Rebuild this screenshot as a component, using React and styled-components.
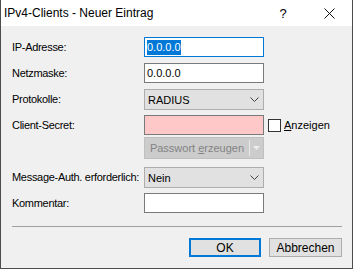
import React from 'react';
import styled, { createGlobalStyle } from 'styled-components';

const GlobalStyle = createGlobalStyle`
  html, body {
    margin: 0;
    padding: 0;
    background: #f0f0f0;
  }
  * {
    box-sizing: border-box;
  }
`

const Window = styled.div`
  width: 353px;
  height: 269px;
  background: #f0f0f0;
  border: 1px solid #4d4d4d;
  border-top: none;
  display: flex;
  flex-direction: column;
  font-family: "Liberation Sans", Arial, sans-serif;
  font-size: 11px;
  color: #000;
`

const TitleBar = styled.div`
  height: 26px;
  background: #fff;
  display: flex;
  align-items: center;
  justify-content: space-between;
  padding-left: 3px;
`

const Title = styled.span`
  font-size: 12px;
  margin-top: -1px;
`

const TitleButtons = styled.div`
  display: flex;
  height: 100%;
`

const TitleButton = styled.div`
  width: 46px;
  height: 100%;
  display: flex;
  align-items: center;
  justify-content: center;
  font-size: 13px;
`

const Form = styled.div`
  display: grid;
  grid-template-columns: 132px 120px auto;
  grid-auto-rows: 26px;
  padding: 11px 0 0 11px;
`

const Label = styled.div`
  height: 20px;
  display: flex;
  align-items: center;
  white-space: nowrap;
  letter-spacing: -0.3px;
`

const TextBox = styled.div`
  height: 20px;
  border: 1px solid ${p => (p.$focused ? '#0078d7' : '#7a7a7a')};
  background: ${p => p.$bg || '#fff'};
  padding: 0 2px;
  display: flex;
  align-items: center;
`

const Selected = styled.span`
  background: #0078d7;
  color: #fff;
  line-height: 15px;
`

const Combo = styled.div`
  height: 21px;
  border: 1px solid #adadad;
  background: #e1e1e1;
  padding: 0 4px 0 3px;
  display: flex;
  align-items: center;
  justify-content: space-between;
`

const SplitButton = styled.div`
  height: 22px;
  margin-top: -4px;
  border: 1px solid #bfbfbf;
  background: #cccccc;
  color: #838383;
  display: flex;
  align-items: stretch;
`

const SplitMain = styled.div`
  flex: 1;
  display: flex;
  align-items: center;
  justify-content: center;
`

const SplitArrow = styled.div`
  width: 14px;
  display: flex;
  align-items: center;
  justify-content: center;
  border-left: 1px solid #e8e8e8;
  margin: 2px 0;
`

const CheckRow = styled.label`
  display: flex;
  align-items: center;
  height: 20px;
  padding-left: 4px;
  gap: 3px;
`

const CheckBox = styled.span`
  width: 13px;
  height: 13px;
  border: 1px solid #333;
  background: #fff;
`

const U = styled.span`
  text-decoration: underline;
  text-underline-offset: 1px;
`

const Separator = styled.div`
  height: 1px;
  background: #a0a0a0;
  margin: 7px 10px 0 11px;
`

const Footer = styled.div`
  display: flex;
  justify-content: flex-end;
  gap: 8px;
  padding: 11px 10px 0 0;
`

const Button = styled.div`
  width: ${p => p.$w}px;
  height: 19px;
  border: ${p => (p.$default ? '2px solid #0078d7' : '1px solid #adadad')};
  background: #e1e1e1;
  display: flex;
  align-items: center;
  justify-content: center;
  font-size: 12px;
`

const Chevron = () => (
  <svg width="9" height="5" viewBox="0 0 9 5">
    <polyline points="0.5,0.5 4.5,4.5 8.5,0.5" fill="none" stroke="#404040" strokeWidth="1" />
  </svg>
)

export default function App() {
  return (
    <Window>
      <GlobalStyle />
      <TitleBar>
        <Title>IPv4-Clients - Neuer Eintrag</Title>
        <TitleButtons>
          <TitleButton>?</TitleButton>
          <TitleButton>
            <svg width="11" height="11" viewBox="0 0 11 11">
              <path d="M0.5 0.5 L10.5 10.5 M10.5 0.5 L0.5 10.5" stroke="#111" strokeWidth="1" />
            </svg>
          </TitleButton>
        </TitleButtons>
      </TitleBar>

      <Form>
        <Label>IP-Adresse:</Label>
        <TextBox $focused><Selected>0.0.0.0</Selected></TextBox>
        <span />

        <Label>Netzmaske:</Label>
        <TextBox>0.0.0.0</TextBox>
        <span />

        <Label>Protokolle:</Label>
        <Combo>RADIUS<Chevron /></Combo>
        <span />

        <Label>Client-Secret:</Label>
        <TextBox $bg="#ffc8c8" />
        <CheckRow>
          <CheckBox />
          <span><U>A</U>nzeigen</span>
        </CheckRow>

        <span />
        <SplitButton>
          <SplitMain>Passwort&nbsp;<U>e</U>rzeugen</SplitMain>
          <SplitArrow>
            <svg width="7" height="4" viewBox="0 0 7 4">
              <polygon points="0,0 7,0 3.5,4" fill="#eeeeee" />
            </svg>
          </SplitArrow>
        </SplitButton>
        <span />

        <Label>Message-Auth. erforderlich:</Label>
        <Combo>Nein<Chevron /></Combo>
        <span />

        <Label>Kommentar:</Label>
        <TextBox />
        <span />
      </Form>

      <Separator />

      <Footer>
        <Button $w={72} $default>OK</Button>
        <Button $w={73}>Abbrechen</Button>
      </Footer>
    </Window>
  );
}
